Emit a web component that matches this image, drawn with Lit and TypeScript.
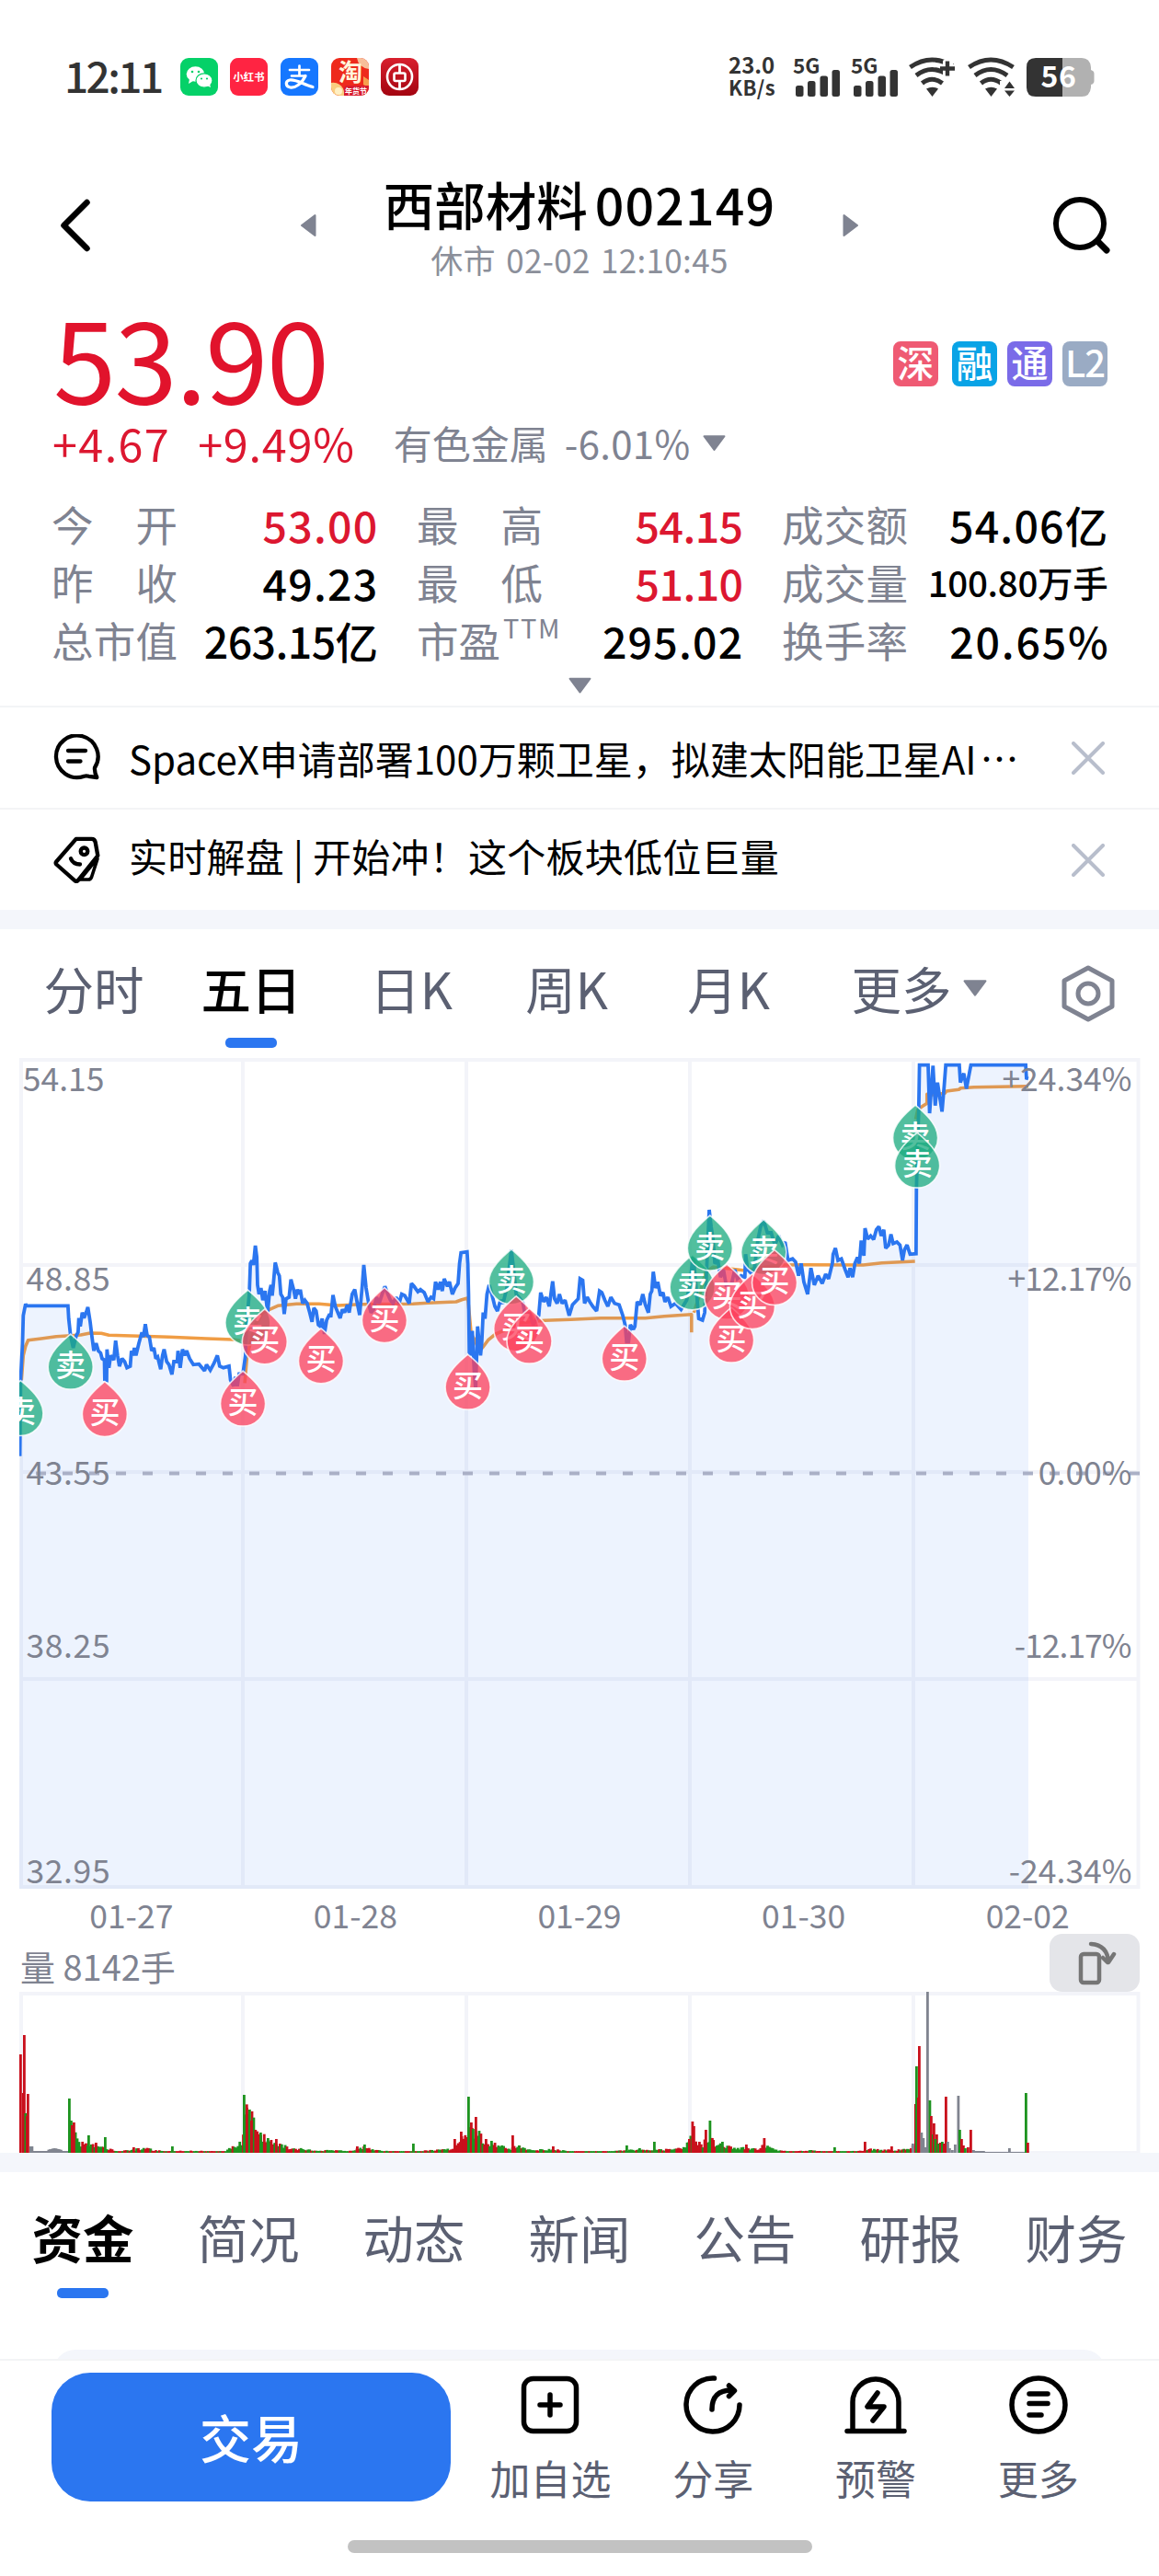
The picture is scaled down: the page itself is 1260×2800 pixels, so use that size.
import { LitElement, html, svg, css } from "lit";
import { customElement } from "lit/decorators.js";
import { classMap } from "lit/directives/class-map.js";

/* Chart samples use a fine grid: 2.45 units per px across, 3 per px down. */
const GX = 2.45;
const GY = 3;

const PRICE = `53,1328 55,1080 60,960 62,870 68,832 70,838 181,838 183,880 188,935 195,975 203,935 208,925 210,878 214,905 219,860 224,878
230,858 234,842 240,890 245,940 250,985 256,960 262,985 268,992 272,1010 278,1015 279,1078 284,1080 285,980 290,1040 295,1000 303,1015 308,952
313,1000 318,1035 325,1010 332,1020 338,1040 347,1035 350,985 354,1000 358,975 362,1000 370,960 378,925 382,940 387,898 392,935 398,940 404,985
410,975 415,1010 420,1005 428,1045 433,1000 437,980 444,1020 450,1030 458,1062 463,1020 472,1020 474,985 480,1040 486,980 492,1000 497,985
505,1010 515,1030 530,1028 545,1050 550,1030 560,1048 570,1025 579,1000 585,1035 595,1040 610,1035 614,1080 622,1100 627,1070 632,1100 637,1060
647,1060 654,1000 656,900 664,800 667,700 671,690 675,705 680,642 684,680 686,770 690,800 695,780 700,820 706,790 713,860 718,790 722,770
725,805 728,770 733,697 740,730 744,740 748,800 753,810 757,865 762,815 770,810 775,752 782,785 787,815 792,785 797,800 800,785 806,830 812,820
818,830 825,860 831,890 836,845 842,855 848,900 853,905 858,880 864,930 870,885 878,865 881,875 887,803 893,840 900,860 906,878 912,850 918,860
925,835 930,860 938,800 945,785 950,820 958,868 965,770 969,705 975,780 982,830 988,860 995,850 1003,810 1010,830 1018,800 1025,775 1033,800
1040,820 1047,830 1055,810 1063,830 1070,800 1078,805 1090,830 1096,765 1103,775 1113,792 1120,785 1130,795 1140,825 1148,810 1155,815 1160,760
1167,785 1173,760 1178,790 1183,750 1192,775 1197,760 1205,800 1212,780 1220,765 1224,700 1228,665 1244,662 1246,700 1248,800 1250,990 1253,1000
1258,920 1263,1050 1267,1110 1272,905 1280,1000 1283,960 1287,860 1292,880 1297,800 1303,770 1310,800 1318,840 1325,855 1333,820 1340,830
1350,780 1362,655 1368,720 1375,800 1385,815 1393,830 1400,880 1410,860 1420,900 1435,870 1440,795 1448,825 1455,810 1463,840 1472,758 1477,815
1484,830 1490,800 1497,830 1505,820 1516,870 1525,835 1540,815 1545,750 1552,755 1557,830 1564,810 1571,825 1579,840 1589,855 1597,790 1603,795
1611,820 1619,840 1627,810 1637,830 1649,835 1659,870 1665,900 1669,955 1674,955 1679,900 1687,915 1691,905 1697,825 1705,835 1712,800 1719,835
1727,860 1732,800 1736,790 1740,727 1746,780 1752,760 1759,805 1766,795 1771,825 1779,810 1787,840 1799,830 1814,850 1829,820 1839,760 1844,690
1847,680 1852,750 1857,820 1861,880 1871,885 1877,860 1881,750 1885,640 1889,525 1894,580 1899,620 1904,700 1912,690 1919,745 1927,720 1934,770
1949,765 1957,720 1964,750 1974,740 1984,745 1986,670 1991,720 1999,730 2009,720 2019,620 2026,580 2034,560 2044,600 2054,600 2064,640 2074,610
2084,640 2091,630 2099,690 2111,685 2119,695 2127,740 2134,700 2141,760 2151,800 2160,715 2169,770 2179,740 2190,765 2199,735 2207,750 2217,700
2219,670 2225,650 2232,690 2241,685 2251,720 2259,745 2264,715 2271,745 2277,700 2284,680 2289,700 2294,625 2301,675 2304,585 2311,620 2319,610
2327,622 2334,590 2341,580 2347,610 2354,590 2359,650 2367,640 2373,605 2379,635 2389,630 2397,640 2404,690 2409,655 2416,640 2424,670 2440,668
2441,460 2444,300 2447,200 2449,53 2472,53 2476,210 2485,55 2491,185 2497,110 2509,205 2515,120 2519,53 2555,53 2558,110 2567,80 2574,130
2586,53 2732,53 2734,95 2739,97`;

const AVERAGES = [
  `57,1080 62,1000 68,970 75,950 110,945 150,938 180,936 215,933 240,927 270,928 290,934 350,936 450,940 550,945 620,948 640,952`,
  `652,1090 658,1000 680,900 700,860 740,838 790,832 850,832 900,837 960,833 1100,832 1140,829 1215,825 1230,818 1245,813
   1247,825 1255,930 1265,950 1275,980 1285,975 1300,950 1320,930 1340,920 1380,895 1450,886 1520,883 1600,878 1719,878 1769,872 1842,866 1842,925`,
  `1848,860 1864,800 1879,730 1899,712 1949,718 1979,722 2019,715 2079,705 2139,704 2299,705 2349,698 2437,693`,
  `2439,230 2444,200 2454,190 2469,178 2469,148 2485,150 2517,145 2521,138 2554,133 2559,128 2594,125 2732,122 2739,122`,
];

type Mark = [kind: "buy" | "sell", x: number, y: number];
const MARKS: Mark[] = [
  ["sell", 55, 1083], ["sell", 188, 932], ["buy", 279, 1086], ["sell", 660, 788], ["buy", 647, 1052], ["buy", 705, 850],
  ["buy", 855, 913], ["buy", 1024, 780], ["buy", 1246, 998], ["sell", 1362, 655], ["buy", 1375, 808], ["buy", 1410, 848],
  ["buy", 1663, 905], ["sell", 1844, 673], ["sell", 1891, 545], ["buy", 1936, 704], ["buy", 1948, 845], ["sell", 2034, 558],
  ["buy", 2004, 735], ["buy", 2063, 657], ["sell", 2438, 185], ["sell", 2443, 275],
];

const COLUMNS = [23, 264, 507, 750, 993, 1237];

@customElement("trend-chart")
class TrendChart extends LitElement {
  static styles = css`
    :host { display: block; height: 903px; }
    svg { display: block; }
    text { font-family: "Noto Sans CJK SC", sans-serif; }
    .grid { stroke: #f3f4f9; stroke-width: 4; fill: none; }
    .area { fill: #2b76f0; fill-opacity: 0.085; }
    .price { fill: none; stroke: #2b76f0; stroke-width: 3.8; stroke-linejoin: miter; stroke-miterlimit: 2; }
    .avg { fill: none; stroke: #f09d45; stroke-width: 3.6; stroke-linejoin: round; }
    .zero { stroke: #aab0c6; stroke-width: 4; stroke-dasharray: 11 18; }
    .axis { fill: #7f8391; font-size: 35.5px; letter-spacing: 0.6px; }
    .end { text-anchor: end; letter-spacing: 0; }
    .tight { letter-spacing: -1px; }
    .pin { stroke: #fff; stroke-opacity: 0.8; stroke-width: 1.6; fill-opacity: 0.76; }
    .buy { fill: #fc405c; }
    .sell { fill: #1cab7f; }
    .glyph { fill: #fff; font-size: 33px; font-weight: 500; text-anchor: middle; }
  `;

  private fit(points: string) {
    return points
      .trim()
      .split(/\s+/)
      .map((p) => {
        const [x, y] = p.split(",").map(Number);
        return `${(x / GX).toFixed(1)},${(y / GY - 10).toFixed(1)}`;
      })
      .join(" ");
  }

  render() {
    const line = this.fit(PRICE);
    const left: [string, number][] = [["54.15", 36], ["48.85", 253], ["43.55", 464], ["38.25", 652], ["32.95", 897]];
    const right: [string, number][] = [["+24.34%", 36], ["+12.17%", 253], ["0.00%", 464], ["-12.17%", 652], ["-24.34%", 897]];
    return html`<svg width="1260" height="903" viewBox="0 0 1260 903">
      <clipPath id="plot"><rect x="21" y="0" width="1219" height="903" /></clipPath>
      <g class="grid">
        <rect x="23" y="2" width="1214.5" height="899" />
        ${COLUMNS.slice(1, 5).map((x) => svg`<path d="M${x} 4V899" />`)}
        ${[225, 450, 675].map((y) => svg`<path d="M23 ${y}H1237" />`)}
      </g>
      <g clip-path="url(#plot)">
        ${AVERAGES.map((a) => svg`<polyline class="avg" points=${this.fit(a)} />`)}
        <polygon class="area" points="21,903 ${line} 1118,903" />
        <polyline class="price" points=${line} />
        <path class="zero" d="M21 451.500H1240" stroke-dashoffset="11" />
        ${MARKS.map(([kind, x, y]) => svg`<g transform="translate(${x / GX} ${y / GY - 10.5})">
          <path class="pin ${kind}" d="M0 0C7 6 24.500 20 24.500 35.500A24.500 24.500 0 0 1 -24.500 35.500C-24.500 20 -7 6 0 0Z" />
          <text class="glyph" y="45.500">${kind === "buy" ? "买" : "卖"}</text>
        </g>`)}
      </g>
      ${left.map(([t, y]) => svg`<text class="axis ${t === "54.15" ? "end" : ""}" x=${t === "54.15" ? 113.5 : 28.5} y=${y}>${t}</text>`)}
      ${right.map(([t, y]) => svg`<text class="axis end ${t.includes("12.17") ? "tight" : ""}" x=${t.includes("12.17") ? 1229.5 : 1230.5} y=${y}>${t}</text>`)}
    </svg>`;
  }
}

/* Volume envelope: x position and typical bar height, both in px. */
const ENVELOPE: [number, number][] = [
  [74, 8], [80, 22], [86, 10], [95, 12], [110, 6], [130, 2], [155, 5], [175, 2], [245, 2], [250, 7], [262, 12], [266, 50], [272, 45],
  [278, 22], [290, 16], [300, 9], [318, 5], [340, 3], [380, 2], [395, 7], [405, 3], [440, 1], [470, 3], [490, 4], [500, 14], [508, 30],
  [514, 22], [520, 20], [526, 12], [540, 9], [552, 4], [562, 9], [575, 3], [600, 4], [625, 1], [670, 2], [685, 3], [705, 3], [740, 5],
  [750, 17], [756, 13], [762, 8], [768, 18], [774, 12], [780, 9], [800, 6], [820, 4], [830, 9], [842, 3], [860, 1], [880, 3], [900, 1],
  [935, 2], [945, 4], [970, 3], [985, 4], [992, 8],
];
type Tone = "up" | "down" | "flat";
const SPIKES: [number, number, Tone][] = [
  [21, 107, "up"], [24, 65, "up"], [25, 128, "up"], [26.500, 43, "down"], [28, 40, "up"], [29, 64, "up"], [74, 59, "down"], [76, 35, "down"],
  [77, 30, "up"], [79, 33, "up"], [95, 19, "down"], [113, 17, "down"], [103, 11, "up"], [144, 6, "up"], [186, 7, "down"], [264, 63, "down"],
  [267, 49, "up"], [270, 47, "down"], [272, 35, "up"], [282, 22, "down"], [299, 15, "up"], [290, 16, "down"], [395, 9, "down"],
  [387, 7, "up"], [448, 10, "down"], [493, 15, "up"], [500, 23, "up"], [508, 61, "down"], [511, 33, "up"], [513, 26, "down"], [516, 39, "up"],
  [519, 18, "down"], [527, 15, "up"], [533, 13, "down"], [556, 19, "up"], [563, 8, "down"], [600, 7, "up"], [680, 8, "down"], [694, 5, "down"],
  [710, 12, "down"], [748, 15, "up"], [751.500, 34, "up"], [753, 29, "up"], [766, 25, "up"], [770.500, 35, "down"], [773, 16, "up"], [784, 12, "down"],
  [810, 9, "up"], [829.500, 16, "up"], [906, 6, "down"], [939, 12, "up"], [968, 7, "up"], [991, 10, "flat"], [994, 53, "up"], [995, 94, "down"],
  [998, 116, "up"], [997, 60, "up"], [1000.500, 22, "flat"], [1002.500, 16, "flat"], [1004.500, 6, "flat"], [1007, 175, "flat"], [1009.500, 57, "down"],
  [1011, 40, "up"], [1013, 20, "down"], [1014, 32, "up"], [1017, 20, "up"], [1015.500, 15, "down"], [1019, 10, "down"], [1021, 11, "up"],
  [1023, 12, "down"], [1025, 10, "up"], [1027, 61, "up"], [1029, 12, "flat"], [1031, 5, "flat"], [1034, 3, "flat"], [1037, 9, "flat"],
  [1040.500, 62, "flat"], [1042, 25, "down"], [1044, 15, "up"], [1046, 8, "up"], [1048, 5, "down"], [1051, 6, "up"], [1054, 25, "up"],
  [1057, 3, "flat"], [1061, 2, "flat"], [1096, 5, "flat"], [1114, 65, "down"], [1116, 11, "up"],
];

@customElement("volume-chart")
class VolumeChart extends LitElement {
  static styles = css`
    :host { display: block; height: 175px; }
    svg { display: block; }
    .grid { stroke: #f3f4f9; stroke-width: 4; fill: none; }
    .up { fill: #c9101c; }
    .down { fill: #1d931f; }
    .flat { fill: #80848f; }
  `;

  private bars() {
    const out: [number, number, Tone][] = [];
    for (let x = 32; x < 74; x += 1.5) out.push([x, x < 35 ? 7 : x > 50 && x < 66 ? 5 - Math.abs(58 - x) / 4 : 2, "flat"]);
    let seed = 17;
    const rand = () => (seed = (seed * 16807) % 2147483647) / 2147483647;
    for (let x = 75; x < 992; x += 1.9) {
      const i = ENVELOPE.findIndex(([ex]) => ex > x);
      if (i < 1) continue;
      const [x0, h0] = ENVELOPE[i - 1];
      const [x1, h1] = ENVELOPE[i];
      const h = h0 + ((h1 - h0) * (x - x0)) / (x1 - x0);
      out.push([x, Math.max(1.8, h * (0.6 + rand() * 0.6)), rand() > 0.5 ? "down" : "up"]);
    }
    for (let x = 1058; x < 1114; x += 2) out.push([x, x < 1070 ? 2 : 1, "flat"]);
    return out.concat(SPIKES);
  }

  render() {
    return html`<svg width="1260" height="175" viewBox="0 0 1260 175">
      <g class="grid">
        <rect x="23" y="2" width="1214.5" height="173" />
        ${COLUMNS.slice(1, 5).map((x) => svg`<path d="M${x} 4V175" />`)}
      </g>
      ${this.bars().map(([x, h, tone]) => svg`<rect class=${tone} x=${x} y=${175 - h} width="2.800" height=${h} />`)}
    </svg>`;
  }
}

@customElement("status-bar")
class StatusBar extends LitElement {
  static styles = css`
    :host { display: flex; height: 166px; align-items: center; justify-content: space-between; padding: 0 70px 0 70px; box-sizing: border-box; color: #333; }
    .side { display: flex; align-items: center; }
    .time { font-size: 46px; font-weight: 500; letter-spacing: -2.6px; line-height: 60px; width: 125.5px; margin-top: -5px; }
    .apps { display: flex; gap: 13.7px; }
    svg { display: block; overflow: visible; }
    .net { font-size: 24px; line-height: 24.5px; font-weight: 700; width: 69px; margin-top: -2px; }
    .unit { font-size: 22px; letter-spacing: 0.4px; }
    text { font-family: "Noto Sans CJK SC", sans-serif; font-weight: 700; }
  `;

  render() {
    const signal = (x: number) => svg`<g transform="translate(${x} 0)">
      <text x="-1" y="17.500" font-size="22.500" fill="#333">5G</text>
      <rect x="2" y="31" width="8.500" height="12" rx="2.500" /><rect x="15" y="26" width="8.500" height="17" rx="2.500" />
      <rect x="28.500" y="20.500" width="8.500" height="22.500" rx="2.500" /><rect x="41.500" y="14" width="8.500" height="29" rx="2.500" /></g>`;
    const wifi = (x: number) => svg`<g transform="translate(${x} 0)" fill="none" stroke="#333" stroke-width="5">
      <path d="M1.500 11Q25 -5 49.500 11" /><path d="M8 20Q25 7 43 20" /><path d="M14.500 28.500Q25 20 36.500 28.500" />
      <path d="M19 34.500Q25.500 31 32 34.500L25.500 43Z" fill="#333" stroke="none" /></g>`;
    return html`
      <div class="side">
        <div class="time">12:11</div>
        <div class="apps">
          <svg width="41" height="41" viewBox="0 0 41 41"><rect width="41" height="41" rx="9" fill="#05d168" />
            <ellipse cx="16.500" cy="17.500" rx="9.800" ry="8.300" fill="#fff" /><path d="M10 23l-1 5 5-3z" fill="#fff" />
            <ellipse cx="26" cy="24.500" rx="9" ry="7.700" fill="#fff" stroke="#05d168" stroke-width="1.200" /><path d="M29 30l4 2-1-4z" fill="#fff" />
            <g fill="#05d168"><circle cx="13" cy="15" r="1.300" /><circle cx="20" cy="15" r="1.300" /><circle cx="23" cy="22.500" r="1.100" /><circle cx="29" cy="22.500" r="1.100" /></g></svg>
          <svg width="41" height="41" viewBox="0 0 41 41"><rect width="41" height="41" rx="9" fill="#ff2442" />
            <text x="20.500" y="25" font-size="11.300" font-weight="900" fill="#fff" text-anchor="middle">小红书</text></svg>
          <svg width="41" height="41" viewBox="0 0 41 41"><rect width="41" height="41" rx="9" fill="#1677ff" />
            <g fill="none" stroke="#fff" stroke-linecap="round"><path d="M10 13H31M20.500 8.500V19M12 19.500H27" stroke-width="2.700" />
            <path d="M27 19.500C23 28 16 33 10.500 32C5 31 5 25 10 24C17 23 25 29 35 31.500" stroke-width="3.200" /></g></svg>
          <svg width="41" height="41" viewBox="0 0 41 41"><rect width="41" height="41" rx="9" fill="#ee2a1c" />
            <path d="M28 0H32A9 9 0 0 1 41 9V12A14 14 0 0 1 28 0Z" fill="#f7bf9a" /><path d="M0 27A12 12 0 0 1 14 41H9A9 9 0 0 1 0 32Z" fill="#f9cd80" />
            <path d="M35 20l6 4v8l-6-3z" fill="#f6a04e" />
            <circle cx="8" cy="36" r="4" fill="#fff0c4" /><path d="M14 41V34Q14 30 18 30H41V32A9 9 0 0 1 32 41Z" fill="#d81c2e" />
            <text x="21" y="25" font-size="26" fill="#fff6dc" text-anchor="middle">淘</text>
            <text x="27" y="38.500" font-size="8" fill="#fff" text-anchor="middle">年货节</text></svg>
          <svg width="41" height="41" viewBox="0 0 41 41"><defs><linearGradient id="boc" x2="0" y2="1"><stop stop-color="#d8202e" /><stop offset="1" stop-color="#a30410" /></linearGradient></defs>
            <rect width="41" height="41" rx="9" fill="url(#boc)" />
            <g fill="none" stroke="#fff"><circle cx="20.500" cy="20.500" r="13.500" stroke-width="2.600" /><rect x="14.500" y="16.500" width="12" height="8.500" rx="1.500" stroke-width="2.600" />
            <path d="M20.500 7V16M20.500 25V34" stroke-width="2.800" /></g></svg>
        </div>
      </div>
      <div class="side">
        <div class="net"><div>23.0</div><div class="unit">KB/s</div></div>
        <svg width="329" height="43" viewBox="0 0 329 43"><g fill="#333">
          ${signal(2)}${signal(65)}${wifi(127)}
          <path d="M168 1H175V8H182V17H175V23H164V4Z" fill="#fff" /><path d="M161 12.500H177M169 4.500V20.500" stroke="#333" stroke-width="4.400" />
          ${wifi(191)}
          <path d="M226 26H246V43H226Z" fill="#fff" /><path d="M231 34L236.500 26.500L242 34ZM231 36.500L236.500 43L242 36.500Z" />
          <path d="M265 1H294V43H265Q255 43 255 33V11Q255 1 265 1Z" />
          <path d="M294 1H315Q324 1 325 11V14Q328.500 15 328.500 18V26Q328.500 29 325 30V33Q324 43 315 43H294Z" fill="#b1b1b1" />
          <text x="290" y="33" font-size="32" fill="#fff" text-anchor="middle" letter-spacing="0.500">56</text></g></svg>
      </div>`;
  }
}

@customElement("app-root")
class AppRoot extends LitElement {
  static styles = css`
    :host { display: flex; flex-direction: column; width: 1260px; height: 2800px; overflow: hidden; background: #fff; color: #000;
      font-family: "Noto Sans CJK SC", "Liberation Sans", sans-serif; white-space: nowrap; }
    * { box-sizing: border-box; }
    svg { display: block; flex: none; }
    .head { display: flex; align-items: center; height: 158px; padding: 0 50px 0 62px; justify-content: space-between; flex: none; }
    .mid { display: flex; align-items: center; justify-content: space-between; width: 608px; margin-left: 16px; }
    .names { display: flex; flex-direction: column; align-items: center; padding-top: 3px; }
    .name { font-size: 55.5px; font-weight: 500; line-height: 64px; display: flex; gap: 8px; }
    .code { letter-spacing: 1.1px; }
    .time { font-size: 35px; line-height: 44px; margin-top: 7px; color: #8b8f9a; letter-spacing: 0.35px; word-spacing: 3px; }
    .quote { padding: 12px 56px 0; height: 443px; flex: none; }
    .row { display: flex; justify-content: space-between; height: 100px; }
    .last { font-size: 123px; line-height: 98px; color: #e1132c; letter-spacing: -1.8px; margin-left: 2px; }
    .badges { display: flex; gap: 11px; margin-top: 35px; }
    .badge { width: 49px; height: 49px; border-radius: 8px; color: #fff; font-size: 40px; font-weight: 500; line-height: 45px; text-align: center; }
    .sz { background: #ef5a73; margin-right: 4px; }
    .rong { background: #09a3e6; }
    .tong { background: #7a6be8; }
    .l2 { background: #9aabc4; letter-spacing: -1px; }
    .change { display: flex; align-items: center; height: 56px; margin-top: 17px; font-size: 48.5px; color: #dc1730; line-height: 56px; }
    .delta { letter-spacing: 1.4px; margin-left: 1px; }
    .pct { margin-left: 30px; letter-spacing: 0.8px; }
    .sector { margin-left: 42px; color: #7f8391; font-size: 42px; display: flex; align-items: center; gap: 14px; }
    .drop { margin-left: 4px; letter-spacing: 0.3px; }
    .stats { display: grid; grid-template-columns: 353.5px 353.5px 353.5px; column-gap: 43.5px; margin-top: 29px; }
    .stat { display: flex; justify-content: space-between; height: 63px; line-height: 63px; }
    .label { color: #7f8391; font-size: 45.5px; display: flex; justify-content: space-between; width: 137px; }
    .sup { font-size: 29px; line-height: 34px; margin-left: 3px; letter-spacing: 1.6px; }
    .val { font-size: 46.5px; font-weight: 500; letter-spacing: 1.2px; margin-right: -2px; }
    .red { color: #dc1730; }
    .small { font-size: 38.5px; letter-spacing: -0.3px; margin-right: -1px; }
    .snug { letter-spacing: -0.6px; margin-right: -1px; }
    .wide { letter-spacing: 1.8px; margin-right: -3px; }
    .fold { margin: 9px auto 0; }
    .news { display: flex; align-items: center; height: 111px; border-top: 2px solid #f3f4f6; padding: 0 59px 0 58px; flex: none; }
    .text { flex: 1; font-size: 42px; margin-left: 31px; line-height: 60px; }
    .dots { display: inline-block; line-height: 1; transform: translateY(-1px); margin-left: 4px; }
    .raised { margin-top: -9px; letter-spacing: 0.25px; }
    .band { height: 21px; background: #f4f6fb; flex: none; }
    .periods { display: grid; grid-template-columns: 170px 170px 180px 158px 194px 220px 148px; height: 140px; padding: 29px 0 0 17px; color: #5b6072; font-size: 54.5px; line-height: 70px; flex: none; }
    .cell { display: flex; flex-direction: column; align-items: center; }
    .on { color: #000; font-weight: 500; }
    .on::after { content: ""; width: 56px; height: 11px; border-radius: 5px; background: #2b76f0; margin-top: 19px; }
    .periods .on { padding-left: 2px; }
    .more { display: flex; justify-content: center; gap: 12px; align-items: center; height: 70px; }
    .gear { height: 82px; }
    .dates { display: grid; grid-template-columns: repeat(5, 1fr); padding: 0 21px; height: 54px; line-height: 55px; font-size: 35.5px; color: #7f8391; text-align: center; flex: none; }
    .volhead { display: flex; justify-content: space-between; height: 58px; line-height: 59px; padding: 0 21px 0 22px; color: #7f8391; font-size: 38px; flex: none; }
    .turn { width: 98px; height: 63px; margin-top: -5px; border-radius: 14px; background: #e4e5e9; padding: 7px 0 0 27px; }
    .tabs { display: grid; grid-template-columns: repeat(7, 180px); height: 193px; padding-top: 35px; font-size: 55.5px; line-height: 70px; color: #5b6072; flex: none; }
    .tabs .cell.on { font-weight: 700; }
    .tabs .on::after { margin-top: 21px; }
    .clip { height: 10px; padding: 0 58px; overflow: hidden; flex: none; }
    .card { height: 80px; background: #f4f6fb; border-radius: 24px; }
    .dock { display: flex; border-top: 2px solid #f3f4f6; padding: 13px 0 0 56px; height: 197px; flex: none; }
    .trade { width: 434px; height: 140px; border-radius: 42px; background: #2b76f0; color: #fff; font-size: 56px; font-weight: 500; line-height: 138px; text-align: center; }
    .acts { display: grid; grid-template-columns: repeat(4, 176.8px); margin-left: 20px; padding-top: 3px; }
    .act { display: flex; flex-direction: column; align-items: center; gap: 17px; font-size: 44px; line-height: 60px; color: #5b6072; }
    .home { width: 505px; height: 14px; border-radius: 7px; background: #c2c2c2; margin: 0 auto; flex: none; }
  `;

  private tri(w: number, h: number) {
    return html`<svg width=${w} height=${h} viewBox="0 0 24 16"><path d="M1.500 1H22.500L12 15Z" fill="#7f8391" stroke="#7f8391" stroke-width="2" stroke-linejoin="round" /></svg>`;
  }

  private cross() {
    return html`<svg width="36" height="36" viewBox="0 0 36 36"><path d="M2 2L34 34M34 2L2 34" stroke="#b8becc" stroke-width="4" stroke-linecap="round" /></svg>`;
  }

  private stat(label: string, value: string, cls = "") {
    const parts = label.endsWith("TTM")
      ? html`<span>市盈</span><span class="sup">TTM</span>`
      : [...label].map((c) => html`<span>${c}</span>`);
    return html`<div class="stat"><div class="label">${parts}</div><div class="val ${cls}">${value}</div></div>`;
  }

  render() {
    const ink = (body: unknown) => html`<svg width="68" height="64" viewBox="0 0 68 64" fill="none" stroke="#000" stroke-width="5.500" stroke-linecap="round" stroke-linejoin="round">${body}</svg>`;
    return html`
      <status-bar></status-bar>
      <header class="head">
        <svg width="40" height="62" viewBox="0 0 40 62"><path d="M32.500 6L7.500 31L32.500 56" fill="none" stroke="#000" stroke-width="6.500" stroke-linecap="round" stroke-linejoin="round" /></svg>
        <div class="mid">
          <svg width="18" height="26" viewBox="0 0 18 26"><path d="M16.500 2V24L2 13Z" fill="#7f8391" stroke="#7f8391" stroke-width="2" stroke-linejoin="round" /></svg>
          <div class="names"><div class="name"><span>西部材料</span><span class="code">002149</span></div><div class="time">休市 02-02 12:10:45</div></div>
          <svg width="18" height="26" viewBox="0 0 18 26"><path d="M1.500 2V24L16 13Z" fill="#7f8391" stroke="#7f8391" stroke-width="2" stroke-linejoin="round" /></svg>
        </div>
        <svg width="68" height="68" viewBox="0 0 68 68" fill="none" stroke="#000" stroke-width="6" stroke-linecap="round"><circle cx="32" cy="32" r="26" /><path d="M52 52L61 61" stroke-width="7" /></svg>
      </header>
      <section class="quote">
        <div class="row"><div class="last">53.90</div>
          <div class="badges"><div class="badge sz">深</div><div class="badge rong">融</div><div class="badge tong">通</div><div class="badge l2">L2</div></div></div>
        <div class="change"><span class="delta">+4.67</span><span class="pct">+9.49%</span>
          <span class="sector"><span>有色金属</span><span class="drop">-6.01%</span>${this.tri(25, 17)}</span></div>
        <div class="stats">
          ${this.stat("今开", "53.00", "red")}${this.stat("最高", "54.15", "red snug")}${this.stat("成交额", "54.06亿")}
          ${this.stat("昨收", "49.23")}${this.stat("最低", "51.10", "red snug")}${this.stat("成交量", "100.80万手", "small")}
          ${this.stat("总市值", "263.15亿", "snug")}${this.stat("市盈TTM", "295.02")}${this.stat("换手率", "20.65%", "wide")}
        </div>
        <svg class="fold" width="25" height="18" viewBox="0 0 24 16"><path d="M1.500 1H22.500L12 15Z" fill="#7f8391" stroke="#7f8391" stroke-width="2" stroke-linejoin="round" /></svg>
      </section>
      <div class="news">
        <svg width="51" height="51" viewBox="0 0 51 51" fill="none" stroke="#000" stroke-width="4.300" stroke-linecap="round" stroke-linejoin="round"><path d="M45 36.500A22.800 22.800 0 1 0 33.500 45.700Q36 45 38.500 45.800L47.300 47Q44.500 41 45 36.500Z" /><path d="M16 18H35M16 29.500H29.500" /></svg>
        <div class="text">SpaceX申请部署100万颗卫星，拟建太阳能卫星AI<span class="dots">…</span></div>${this.cross()}
      </div>
      <div class="news">
        <svg width="51" height="51" viewBox="0 0 51 51" fill="none" stroke="#000" stroke-width="4.300" stroke-linecap="round" stroke-linejoin="round"><path d="M24.700 2.800H41.500Q45 2.800 45.700 6.500L48.300 21L26.500 48.300Q25 49.500 23.500 48.300L3.300 30.500Q2 29 3.300 27.500Z" /><path d="M48 24.500L41.500 44.500Q40.500 47 38 47H29L47 25" stroke-width="3.600" /><circle cx="33.500" cy="16.300" r="3.800" /><path d="M19 24.300Q21.500 30.300 29 30.500" /></svg>
        <div class="text raised">实时解盘 | 开始冲！这个板块低位巨量</div>${this.cross()}
      </div>
      <div class="band"></div>
      <nav class="periods">
        ${["分时", "五日", "日K", "周K", "月K"].map((t) => html`<div class=${classMap({ cell: true, on: t === "五日" })}>${t}</div>`)}
        <div class="more"><span>更多</span>${this.tri(26, 18)}</div>
        <div class="more gear"><svg width="62" height="64" viewBox="0 0 62 64" fill="none" stroke="#7f8391" stroke-width="5" stroke-linejoin="round"><path d="M31 4L57 18V46L31 60L5 46V18Z" /><circle cx="31" cy="32" r="11" /></svg></div>
      </nav>
      <trend-chart></trend-chart>
      <div class="dates">${["01-27", "01-28", "01-29", "01-30", "02-02"].map((d) => html`<span>${d}</span>`)}</div>
      <div class="volhead"><span>量 8142手</span>
        <div class="turn"><svg width="46" height="50" viewBox="0 0 46 50" fill="none" stroke="#757575" stroke-width="4.500" stroke-linecap="round" stroke-linejoin="round"><rect x="7" y="15" width="20" height="31" rx="3" /><path d="M18 4Q36 5 37 24M36 24L31 19M37 24L43 15" /></svg></div></div>
      <volume-chart></volume-chart>
      <div class="band"></div>
      <nav class="tabs">${["资金", "简况", "动态", "新闻", "公告", "研报", "财务"].map((t) => html`<div class=${classMap({ cell: true, on: t === "资金" })}>${t}</div>`)}</nav>
      <div class="clip"><div class="card"></div></div>
      <footer class="dock">
        <div class="trade">交易</div>
        <div class="acts">
          <div class="act">${ink(svg`<rect x="5.500" y="3.500" width="57" height="57" rx="10" /><path d="M34 21V43M23 32H45" />`)}<span>加自选</span></div>
          <div class="act">${ink(svg`<path d="M35.500 3A29 29 0 1 0 63 32" /><path d="M33 37C33 25 38 16 55 16M51.500 11L57.500 16.500L51.500 22.500" />`)}<span>分享</span></div>
          <div class="act">${ink(svg`<path d="M3 60.500H65M9 60V29A25 25 0 0 1 59 29V60" /><path d="M36 19L25 34H43L31 49" />`)}<span>预警</span></div>
          <div class="act">${ink(svg`<circle cx="34" cy="32" r="29" /><path d="M24 20H44M24 30.500H44M24 43H37" />`)}<span>更多</span></div>
        </div>
      </footer>
      <div class="home"></div>
    `;
  }
}
